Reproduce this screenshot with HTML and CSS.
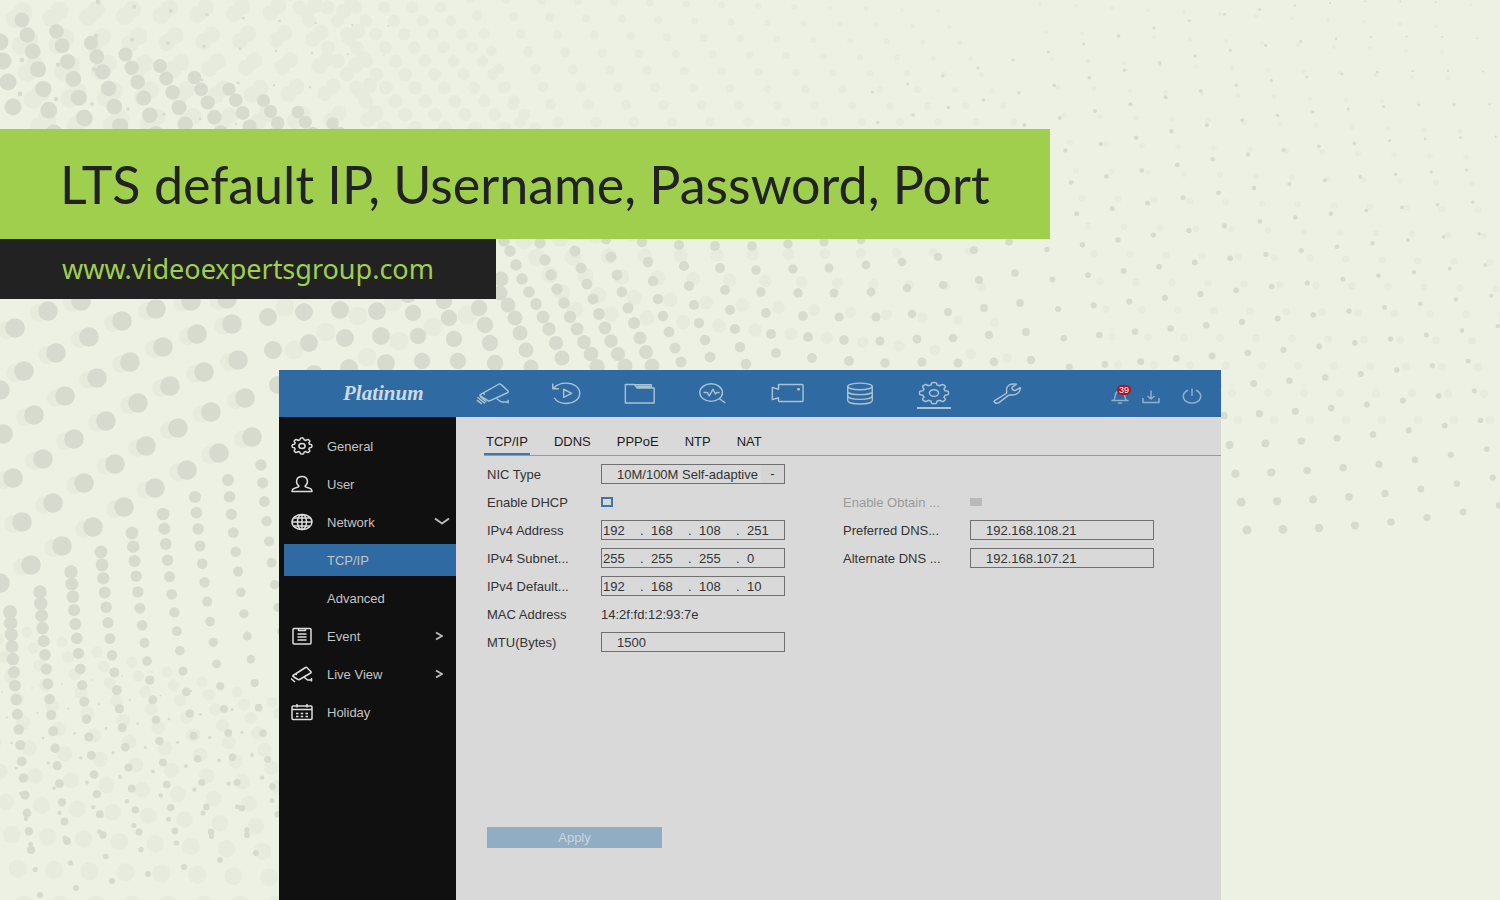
FILE: index.html
```html
<!DOCTYPE html>
<html lang="en">
<head>
<meta charset="utf-8">
<title>LTS default IP, Username, Password, Port</title>
<link rel="stylesheet" href="styles.css">
</head>
<body>
<svg class="dots" aria-hidden="true"></svg>
<svg class="sprites" aria-hidden="true">
  <symbol id="gear" viewBox="-12 -12 24 24" preserveAspectRatio="none">
    <path vector-effect="non-scaling-stroke" d="M-2.2-8.3Q-2-10.8-1-10.8H1Q2-10.8 2.2-8.3L4.3-7.4Q6.3-9 7-8.4L8.4-7Q9-6.3 7.4-4.3L8.3-2.2Q10.8-2 10.8-1V1Q10.8 2 8.3 2.2L7.4 4.3Q9 6.3 8.4 7L7 8.4Q6.3 9 4.3 7.4L2.2 8.3Q2 10.8 1 10.8H-1Q-2 10.8-2.2 8.3L-4.3 7.4Q-6.3 9-7 8.4L-8.4 7Q-9 6.3-7.4 4.3L-8.3 2.2Q-10.8 2-10.8 1V-1Q-10.8-2-8.3-2.2L-7.4-4.3Q-9-6.3-8.4-7L-7-8.4Q-6.3-9-4.3-7.4Z"/>
    <circle vector-effect="non-scaling-stroke" r="3.4"/>
  </symbol>
  <symbol id="camera" viewBox="0 0 36 26">
    <path d="M4.5 14.200 24 3.200q1.500-.8 2.700.4l7 6.400q1.200 1.300-.4 2.200L15 20.600q-1.500.8-2.800-.4l-7.500-4.600q-1-.8-.2-1.400zM8 13.500h1.500M1 20l5 4M1.500 17l8 6.500M4 16l7 6M22 18.500l4 3q1 .8 2.500.5h6M34 19.500v4"/>
  </symbol>
</svg>

<header class="banner">
  <h1 class="banner-title">LTS default IP, Username, Password, Port</h1>
  <p class="banner-site"><a href="#">www.videoexpertsgroup.com</a></p>
</header>

<main class="app">
  <div class="topbar">
    <div class="brand">Platinum</div>
    <nav class="modules" aria-label="Modules">
      <button aria-label="Live view"><svg viewBox="0 0 36 26"><use href="#camera"/></svg></button>
      <button aria-label="Playback"><svg viewBox="0 0 36 26"><path d="M5 7.500C8 3 13 2 18.500 2c8 0 14 4.500 14 10.700s-6 10.800-14 10.800c-6 0-11-2.500-13-6M4 2.500v5.500h6.500M15.500 8.500v8.500l8.500-4.200z"/></svg></button>
      <button aria-label="Files"><svg viewBox="0 0 36 26"><path d="M2.500 23V3.500h9.500l3 3.700h18V23zM12.500 3.800h17.500v3.200M15 5.500h14"/></svg></button>
      <button aria-label="Analysis"><svg viewBox="0 0 36 26"><ellipse cx="16" cy="12" rx="12" ry="9.300"/><path d="M8 12h4l2 3.500 4-7 2.500 5 1.500-1.500h3M25 18.500l6 4.500"/></svg></button>
      <button aria-label="Cameras"><svg viewBox="0 0 36 26"><path d="M9 3.500h25q1 0 1 1v16q0 1-1 1H10q-1 0-1-1v-3l-6.500 2V6.500L9 8.500zM29.500 8h1.500v1h-1.500z"/></svg></button>
      <button aria-label="Storage"><svg viewBox="0 0 36 26"><ellipse cx="18" cy="5.500" rx="13" ry="3.500"/><path d="M5 5.500v15c0 2 5 3.700 13 3.700s13-1.700 13-3.700v-15M5 10.500c0 2 5 3.700 13 3.700s13-1.700 13-3.700M5 15.500c0 2 5 3.700 13 3.700s13-1.700 13-3.700"/></svg></button>
      <button aria-label="System" class="is-current"><svg viewBox="0 0 36 26"><use href="#gear" x="1" y="0" width="34" height="25"/></svg></button>
      <button aria-label="Maintenance"><svg viewBox="0 0 36 26"><path d="M5 20.500 17 13q1.200-1 .5-3C17 5 21 2 28 3.200l-4.500 3c-1 1.500 1 4 3.500 3.500l5-3C32.500 11 29 15 21.500 14.500q-1.500 0-2.500.8L9.500 22.600q-2 1.200-4 .2t-.5-2.300z"/></svg></button>
    </nav>
    <div class="tools">
      <button class="alerts" aria-label="Alarms"><svg viewBox="0 0 20 18"><path d="M1.500 13.500h17M3.500 13.500C5 12 5 10 5.500 7.500S8 4 10 4s4 1 4.500 3.500.5 4.500 2 6M8 15.500q2 1.500 4 0"/></svg><span class="badge">39</span></button>
      <button aria-label="Downloads"><svg viewBox="0 0 20 18"><path d="M2 11v4.500h16V11M10 3.500v8M6.500 9l3.500 3 3.500-3"/></svg></button>
      <button class="power" aria-label="Power"><svg viewBox="0 0 20 18"><path d="M6 3.200C-2 7 1 16 10 16s12-9 4-12.800M10 1.500V9"/></svg></button>
    </div>
  </div>

  <nav class="sidebar" aria-label="System settings">
    <a href="#"><svg viewBox="0 0 22 18"><use href="#gear" width="22" height="18"/></svg>General</a>
    <a href="#"><svg viewBox="0 0 22 18"><path d="M8 11C4 8 5 1.500 11 1.500S18 8 14 11q0 1.200 3 1.700 4 .8 4 3.800H1q0-3 4-3.800 3-.5 3-1.700z"/></svg>User</a>
    <a href="#"><svg viewBox="0 0 22 18"><ellipse cx="11" cy="9" rx="10" ry="7.500"/><ellipse cx="11" cy="9" rx="4.500" ry="7.500"/><path d="M1 9h20M11 1.500v15M3 5h16M3 13h16"/></svg>Network<svg class="caret" viewBox="0 0 16 10"><path d="M1 1.500l7 5 7-5"/></svg></a>
    <a href="#" class="sub is-current">TCP/IP</a>
    <a href="#" class="sub">Advanced</a>
    <a href="#"><svg viewBox="0 0 22 18"><path d="M3 1.500h16q1 0 1 1v13.500q0 1-1 1H3q-1 0-1-1V2.500q0-1 1-1zM7.500 1.500v2h7v-2zM6.500 7h9M6.500 10h9M6.500 13h9"/></svg>Event<svg class="caret more" viewBox="0 0 16 10"><path d="M6 1.500l6 3.500-6 3.500"/></svg></a>
    <a href="#"><svg viewBox="0 0 22 18"><path d="M2 10.500 14.500 2.500q.8-.5 1.500.2l4 4q.6.8-.3 1.300L8.500 14.500q-.8.5-1.500 0L2.200 11.500q-.7-.5-.2-1zM5 9.500h1M0 13.500l4 3.500M13.500 12.500l3 2.500h4M20.500 13v3.500"/></svg>Live View<svg class="caret more" viewBox="0 0 16 10"><path d="M6 1.500l6 3.500-6 3.500"/></svg></a>
    <a href="#"><svg viewBox="0 0 22 18"><path d="M2 3h18q1 0 1 1v11.500q0 1-1 1H2q-1 0-1-1V4q0-1 1-1zM1 6.500h20M6 1v3.500M16 1v3.500M5 10.500h2.500M9.700 10.500h2.500M14.500 10.500H17M5 13.500h2.500M9.700 13.500h2.500M14.500 13.500H17"/></svg>Holiday</a>
  </nav>

  <section class="content">
    <nav class="tabs" aria-label="Network settings">
      <a href="#" class="is-current">TCP/IP</a><a href="#">DDNS</a><a href="#">PPPoE</a><a href="#">NTP</a><a href="#">NAT</a>
    </nav>
    <form class="form">
      <div class="columns">
        <div class="fields">
          <label for="nic">NIC Type</label>
          <span class="select"><select id="nic"><option>10M/100M Self-adaptive</option></select></span>
          <label for="dhcp">Enable DHCP</label>
          <input type="checkbox" id="dhcp">
          <label for="ip">IPv4 Address</label>
          <span class="ip"><input id="ip" value="192"><i>.</i><input aria-label="IPv4 address 2" value="168"><i>.</i><input aria-label="IPv4 address 3" value="108"><i>.</i><input aria-label="IPv4 address 4" value="251"></span>
          <label for="mask">IPv4 Subnet...</label>
          <span class="ip"><input id="mask" value="255"><i>.</i><input aria-label="Subnet 2" value="255"><i>.</i><input aria-label="Subnet 3" value="255"><i>.</i><input aria-label="Subnet 4" value="0"></span>
          <label for="gw">IPv4 Default...</label>
          <span class="ip"><input id="gw" value="192"><i>.</i><input aria-label="Gateway 2" value="168"><i>.</i><input aria-label="Gateway 3" value="108"><i>.</i><input aria-label="Gateway 4" value="10"></span>
          <span>MAC Address</span>
          <span>14:2f:fd:12:93:7e</span>
          <label for="mtu">MTU(Bytes)</label>
          <input class="text" id="mtu" value="1500">
        </div>
        <div class="fields dns">
          <label for="auto" class="muted">Enable Obtain ...</label>
          <input type="checkbox" id="auto" disabled>
          <label for="dns1">Preferred DNS...</label>
          <input class="text" id="dns1" value="192.168.108.21">
          <label for="dns2">Alternate DNS ...</label>
          <input class="text" id="dns2" value="192.168.107.21">
        </div>
      </div>
      <button type="button" class="apply">Apply</button>
    </form>
  </section>
</main>
<script src="dots.js"></script>
</body>
</html>
```
FILE: styles.css
```css
* { box-sizing: border-box; }

body {
  margin: 0;
  min-height: 100vh;
  display: flex;
  flex-direction: column;
  background: #edf1e3;
  font-family: "Liberation Sans", Arial, sans-serif;
  font-size: 13px;
  color: #333;
  overflow-x: hidden;
}

a { color: inherit; text-decoration: none; }
button { border: 0; padding: 0; background: none; font: inherit; color: inherit; }
svg { fill: none; stroke: currentColor; stroke-linejoin: round; }

.dots {
  position: absolute;
  inset: 0;
  width: 100%;
  height: 100%;
  z-index: -1;
  stroke: none;
}
.dots .strong { fill: #d7dbcf; }
.dots .faint { fill: #e7ebde; }
.sprites { position: absolute; width: 0; height: 0; }

.banner {
  padding-top: 129px;
  font-family: "Noto Sans", "Open Sans", sans-serif;
}
.banner-title {
  margin: 0;
  width: 70%;
  padding: 0 0 0 60px;
  background: #a0cf4e;
  color: #222;
  font-family: Lato, "Open Sans", sans-serif;
  font-size: 52px;
  font-weight: 400;
  line-height: 110px;
  white-space: nowrap;
}
.banner-site {
  margin: 0;
  width: 33.1%;
  padding-left: 62px;
  background: #222;
  color: #a0cf4e;
  font-size: 27px;
  line-height: 60px;
}

.app {
  flex: 1;
  width: 62.8%;
  margin: 71px auto 0;
  display: grid;
  grid-template-columns: 177px 1fr;
  grid-template-rows: 47px 1fr;
  background: #d9d9d9;
}

.topbar {
  grid-column: 1 / -1;
  display: grid;
  grid-template-columns: 177px 588px 1fr;
  align-items: center;
  background: #306aa3;
  color: #a9c3cf;
}
.brand {
  padding-left: 64px;
  color: #ccd9e2;
  font: italic 700 21px "Liberation Serif", serif;
}
.modules { display: grid; grid-template-columns: repeat(8, 1fr); justify-items: center; }
.modules button { height: 30px; padding-top: 2px; border-bottom: 2px solid transparent; }
.modules .is-current { border-color: #a9c3cf; }
.modules svg { display: block; width: 34px; height: 25px; stroke-width: 1.5; }

.tools { display: flex; justify-content: flex-end; gap: 11px; padding: 4px 19px 0 0; color: #8fb0cb; }
.tools svg { display: block; width: 20px; height: 18px; stroke-width: 1.5; }
.tools .alerts { position: relative; }
.tools .power { margin-left: 10px; }
.badge {
  position: absolute;
  top: -2px;
  right: -1px;
  width: 14px;
  border-radius: 5px;
  background: #b01020;
  color: #fff;
  font-size: 9px;
  line-height: 10px;
}

.sidebar { padding: 10px 0 0 5px; background: #101010; color: #c4c4c4; }
.sidebar a { display: flex; align-items: center; height: 38px; padding: 0 6px 0 7px; }
.sidebar svg { width: 22px; height: 18px; margin-right: 14px; stroke-width: 1.5; color: #ddd; }
.sidebar .caret { width: 16px; height: 10px; margin: 0 0 0 auto; stroke-width: 2; color: #bbb; }
.sidebar .more { margin-right: 4px; }
.sidebar .sub { padding-left: 43px; }
.sidebar .sub.is-current { height: 32px; margin: 3px 0; background: #306aa3; }

.content { padding: 14px 0 0 28px; }
.tabs { display: flex; gap: 22px; border-bottom: 1px solid #9a9a9a; color: #1c1c1c; }
.tabs a { padding: 0 2px; line-height: 22px; border-bottom: 2px solid transparent; }
.tabs .is-current { border-color: #4378ac; }

.form { padding: 8px 0 0 3px; }
.columns { display: flex; gap: 58px; }
.fields {
  display: grid;
  grid-template-columns: 114px 184px;
  grid-auto-rows: 20px;
  row-gap: 8px;
  align-content: start;
  align-items: center;
}
.dns { grid-template-columns: 127px 184px; padding-top: 28px; }
.muted { color: #999; }

.text, .select select, .ip {
  width: 100%;
  height: 20px;
  border: 1px solid #707070;
  border-radius: 0;
  background: none;
  font: inherit;
  color: inherit;
}
.text { padding: 0 15px; }
.select { position: relative; display: block; }
.select select { display: block; appearance: none; padding: 0 0 0 15px; }
.select::after {
  content: "-";
  position: absolute;
  inset: 1px 1px 1px auto;
  width: 23px;
  background: #d5d5d5;
  line-height: 18px;
  text-align: center;
  pointer-events: none;
}
.ip { display: grid; grid-template-columns: 38px 10px 38px 10px 38px 10px 1fr; align-items: center; }
.ip input { width: 100%; padding: 0 0 0 1px; border: 0; background: none; font: inherit; color: inherit; }
.ip i { font-style: normal; }

input[type="checkbox"] { appearance: none; margin: 0; width: 12px; height: 10px; border: 2px solid #3f75ab; }
input[type="checkbox"]:disabled { border: 0; height: 8px; background: #b9b9b9; }

.apply {
  display: block;
  width: 175px;
  height: 21px;
  margin-top: 175px;
  background: #90adc3;
  color: #ccd6dd;
}
```
FILE: dots.js
```js
const svg = document.querySelector('.dots');
const NS = 'http://www.w3.org/2000/svg';

function dot(x, y, r, cls) {
  const c = document.createElementNS(NS, 'circle');
  c.setAttribute('cx', x.toFixed(1));
  c.setAttribute('cy', y.toFixed(1));
  c.setAttribute('r', r.toFixed(1));
  c.setAttribute('class', cls);
  svg.appendChild(c);
}

/* Dots along a column whose vertical spacing eases; bend curves it sideways. */
function column(x0, y0, x1, y1, n, r0, r1, cls, ease = 1, bend = 0, maxY = 9999) {
  for (let i = 0; i < n; i++) {
    const t = i / (n - 1);
    const y = y0 + (y1 - y0) * (ease * t + (1 - ease) * t * t);
    const x = x0 + (x1 - x0) * ((1 - bend) * t + bend * t * t);
    if (y < maxY) dot(x, y, r0 + (r1 - r0) * t, cls);
  }
}

/* Pale lattices behind everything */
for (const [dx, dy] of [[0, 0], [8, -7]])
  for (let j = 0; j < 5; j++)
    for (let i = -2; i < 8; i++)
      dot(88 + dx + i * 36.500 + j * 6, 17 + dy + j * 27 - i * 0.8, 9 - i * 0.2, 'faint');
for (let i = 0; i < 6; i++) column(290 + i * 28, -6, 385 + i * 30, 128, 11, 7 - i * 0.3, 7.5 - i * 0.3, 'faint', 1);
for (let i = 0; i < 14; i++) column(470 + i * 36, -2 + i, 520 + i * 38, 122, 8, 5 - i * 0.25, 6 - i * 0.2, 'faint');
for (let i = 0; i < 13; i++) column(524 + i * 36, 240 - i * 2, 575 + i * 36, 310 + i * 4, 5, 9 - i * 0.45, 8 - i * 0.25, 'faint');
for (let i = 0; i < 12; i++) column(1040 + i * 36, 4 + i * 2, 1130 + i * 36, 420, 16, 2, 4.5, 'faint');
for (let i = -1; i < 9; i++) column(-8 + i * 35, 622 + i * 10, 60 + i * 36, 905, 12, 5.5, 9.5, 'faint', 0.6);

/* Upper left ridge */
for (let i = 0; i < 11; i++)
  column(22 + i * 34.500, 20 + i * 11.500, 54 + i * 36, 133 + i * 7, 7, 7.5 - i * 0.15, 8.6 - i * 0.15, 'strong', 0.75);
[[0, 42], [3, 61], [8, 82], [13, 107]].forEach(([x, y]) => dot(x, y, 8.5, 'strong'));

/* Large dots on the left */
const large = [
  [15, 328], [24, 371], [34, 415], [43, 459], [53, 503], [62, 546], [13, 478], [22, 522], [31, 565], [3, 434], [0, 390], [0, 583],
  [48, 311], [56, 353], [65, 396], [74, 439], [84, 483], [93, 527], [89, 337], [97, 378], [106, 421], [115, 464], [124, 507],
  [81, 301], [122, 321], [130, 362], [138, 403], [146, 446], [155, 488], [156, 309], [163, 347], [170, 386], [178, 428], [187, 470],
  [191, 301], [197, 334], [204, 372], [211, 412], [219, 453], [227, 299], [232, 324], [238, 360], [245, 398], [252, 437],
  [268, 317], [273, 350], [278, 385], [304, 312], [309, 343], [314, 374], [340, 310], [345, 338], [349, 368],
  [377, 311], [381, 336], [386, 363], [408, 295], [413, 313], [418, 336], [422, 361], [444, 301], [449, 318], [454, 339], [458, 361],
  [479, 308], [485, 325], [490, 343], [495, 363]
];
large.filter(([x]) => x < 260).forEach(([x, y]) => dot(x - 9, y + 2, 9, 'faint'));
[[285, 307], [326, 332], [294, 350], [358, 316], [399, 341], [367, 357], [393, 302], [433, 327], [467, 315]].forEach(([x, y]) => dot(x, y, 9.5, 'faint'));
large.forEach(([x, y]) => dot(x, y, x > 400 ? 8.2 : x > 260 ? 9 : 9.8, 'strong'));

/* Steep columns, lower left */
const starts = [[10, 612], [40, 592], [71, 572], [101, 552], [132, 533], [163, 514], [195, 497], [228, 480], [261, 465]];
const ends = [850, 841, 835, 832, 831, 832, 835, 843, 852];
starts.forEach(([x, y], i) => column(x, y, 31 + i * 36, ends[i], 17, 7 - i * 0.15, 4 - i * 0.15, 'strong', 0.72, 0.6));
for (let i = 0; i < 8; i++) column(2 + i * 30, 692 - i * 4, 40 + i * 36, 895 - i * 7, 9, 0.8, 3, 'strong');

/* Waves below the banner */
const waves = [
  [[504, 241], [510, 251], [516, 265], [522, 279], [529, 292], [536, 304], [543, 317], [549, 329], [556, 343], [562, 358]],
  [[540, 243], [545, 260], [551, 275], [557, 289], [564, 303], [570, 317], [577, 329], [584, 342], [591, 354], [597, 367]],
  [[575, 251], [581, 268], [587, 284], [593, 299], [599, 314], [605, 328], [611, 341], [618, 354], [625, 366]],
  [[606, 239], [611, 257], [617, 275], [622, 292], [628, 308], [634, 323], [640, 338], [646, 352], [652, 366]],
  [[642, 242], [648, 262], [653, 281], [658, 299], [663, 316], [669, 332], [675, 348], [681, 362]],
  [[679, 245], [684, 266], [689, 286], [694, 305], [699, 323], [705, 340], [710, 357]],
  [[715, 246], [720, 268], [725, 290], [730, 310], [735, 329], [740, 347], [746, 364]],
  [[752, 246], [756, 270], [761, 292], [766, 313], [771, 334], [776, 353]],
  [[788, 244], [793, 269], [798, 293], [803, 316], [808, 337], [812, 358]],
  [[824, 242], [829, 268], [834, 293], [839, 317], [844, 340], [849, 361]],
  [[861, 240], [866, 265], [871, 292], [876, 317], [880, 341], [885, 363]],
  [[902, 262], [907, 288], [912, 314], [917, 339], [922, 362]],
  [[938, 257], [943, 285], [948, 312], [953, 338], [958, 363]],
  [[974, 250], [979, 280], [984, 308], [989, 335], [994, 362]],
  [[1009, 242], [1015, 273], [1020, 303], [1026, 332], [1031, 360]]
];
waves.forEach((w, i) => w.forEach(([x, y]) => dot(x, y, 5.8 - i * 0.14 + Math.max(0, y - 300) * (i < 4 ? 0.03 : 0.006), 'strong')));
[[501, 279], [500, 293], [508, 305], [515, 318], [520, 333], [526, 350], [531, 367]].forEach(([x, y]) => dot(x, y, 7.5, 'strong'));

/* Long columns on the right */
for (let k = -8; k < 12; k++) {
  const p = Math.max(0, k);
  column(1154 + k * 35.200, 28 - k * 8 + p * p * 0.6, 1247 + k * 36, 530 - p * p * 0.5, 17,
    1.6 - p * 0.1, 4.6 - p * 0.2, 'strong', 1.12, 0, k < -4 ? 125 : 9999);
}

/* Specks fading across the top */
for (let i = 0; i < 9; i++) {
  dot(98 + i * 36.300, 2 + i * 5 - i * i * 0.25, 2.3 - i * 0.17, 'strong');
  dot(96 + i * 36, 36 + i * 4 - i * i * 0.2, 2.2 - i * 0.17, 'strong');
  dot(22 + i * 36, 60 + i * 5 - i * i * 0.2, 2.4 - i * 0.15, 'strong');
  dot(20 + i * 36, 94 + i * 5, 2.4 - i * 0.2, 'strong');
}
```
